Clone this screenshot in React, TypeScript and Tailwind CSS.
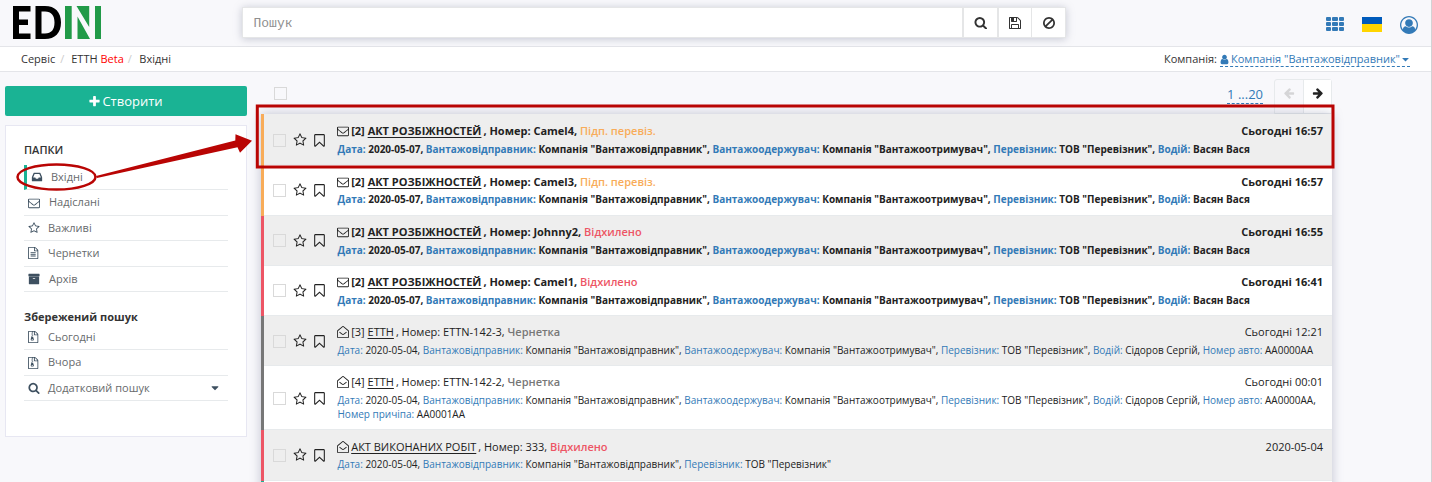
import React from "react";

const P: Record<string, string> = {
  envelope:
    "M1664 1504v-768q-32 36-69 66-268 206-426 338-51 43-83 67t-86.5 48.5-102.5 24.5h-2q-48 0-102.5-24.5t-86.5-48.5-83-67q-158-132-426-338-37-30-69-66v768q0 13 9.5 22.5t22.5 9.5h1472q13 0 22.5-9.5t9.5-22.5zm0-1051v-24.5l-.5-13-3-12.5-5.5-9-9-7.5-14-2.5h-1472q-13 0-22.5 9.5t-9.5 22.5q0 168 147 284 193 152 401 317 6 5 35 29.5t46 37.5 44.5 31.5 50.5 27.5 43 9h2q20 0 43-9t50.5-27.5 44.5-31.5 46-37.5 35-29.5q208-165 401-317 54-43 100.5-115.5t46.5-131.5zm128-37v1088q0 66-47 113t-113 47h-1472q-66 0-113-47t-47-113v-1088q0-66 47-113t113-47h1472q66 0 113 47t47 113z",
  envelopeOpen:
    "M64 640L800 50Q896 -20 992 50L1728 640Q1792 700 1792 770V1632Q1792 1792 1632 1792H160Q0 1792 0 1632V770Q0 700 64 640ZM160 730Q128 755 128 790V1632Q128 1664 160 1664H1632Q1664 1664 1664 1632V790Q1664 755 1632 730L930 165Q896 140 862 165ZM330 960L410 860L800 1170Q896 1240 992 1170L1382 860L1462 960L1060 1280Q896 1400 732 1280Z",
  bookmark:
    "M1408 256h-1024v1242l423-406 89-85 89 85 423 406v-1242zm12-128q23 0 44 9 33 13 52.5 41t19.5 62v1289q0 34-19.5 62t-52.5 41q-19 8-44 8-48 0-83-32l-441-424-441 424q-36 33-83 33-23 0-44-9-33-13-52.5-41t-19.5-62v-1289q0-34 19.5-62t52.5-41q21-9 44-9h1048z",
  star: "M1201 1004l306-297-422-62-189-382-189 382-422 62 306 297-73 421 378-199 377 199zm527-357q0 22-26 48l-363 354 86 500q1 7 1 20 0 50-41 50-19 0-40-12l-449-236-449 236q-22 12-40 12-21 0-31.5-14.5t-10.5-35.5q0-6 2-20l86-500-364-354q-25-27-25-48 0-37 56-46l502-73 225-455q19-41 49-41t49 41l225 455 502 73q56 9 56 46z",
  inbox:
    "M1151 960h316q-1-3-2.5-8t-2.5-8l-212-496h-708l-212 496q-1 2-2.5 8t-2.5 8h316l95 192h320zm513 30v482q0 26-19 45t-45 19h-1408q-26 0-45-19t-19-45v-482q0-62 25-123l238-552q10-25 36.5-42t52.5-17h832q26 0 52.5 17t36.5 42l238 552q25 61 25 123z",
  search:
    "M1216 832q0-185-131.5-316.5t-316.5-131.5-316.5 131.5-131.5 316.5 131.5 316.5 316.5 131.5 316.5-131.5 131.5-316.5zm512 832q0 52-38 90t-90 38q-54 0-90-38l-343-342q-179 124-399 124-143 0-273.5-55.5t-225-150-150-225-55.5-273.5 55.5-273.5 150-225 225-150 273.5-55.5 273.5 55.5 225 150 150 225 55.5 273.5q0 220-124 399l343 343q37 37 37 90z",
  floppy:
    "M512 1536h768v-384h-768v384zm896 0h128v-896q0-14-10-38.5t-20-34.5l-281-281q-10-10-34-20t-39-10v416q0 40-28 68t-68 28h-576q-40 0-68-28t-28-68v-416h-128v1280h128v-416q0-40 28-68t68-28h832q40 0 68 28t28 68v416zm-384-928v-320q0-13-9.5-22.5t-22.5-9.5h-192q-13 0-22.5 9.5t-9.5 22.5v320q0 13 9.5 22.5t22.5 9.5h192q13 0 22.5-9.5t9.5-22.5zm640 32v928q0 40-28 68t-68 28h-1344q-40 0-68-28t-28-68v-1344q0-40 28-68t68-28h928q40 0 88 20t76 48l280 280q28 28 48 76t20 88z",
  ban: "M1440 893q0-161-87-295l-754 753q137 89 297 89 111 0 211.5-43.5t173.5-116.5 116-174.5 43-212.5zm-999 299l755-754q-135-91-300-91-148 0-273 73t-198 199-73 274q0 162 89 299zm1223-299q0 157-61 300t-163.5 246-245 164-298.5 61-298.5-61-245-164-163.5-246-61-300 61-299.5 163.5-245.5 245-164 298.5-61 298.5 61 245 164 163.5 245.5 61 299.5z",
  userCircle:
    "M896 0q182 0 348 71t286 191 191 286 71 348q0 181-70.5 347t-190.5 286-286 191.5-349 71.5-349-71-285.5-191.5-190.5-286-71-347.5 71-348 191-286 286-191 348-71zm619 1351q149-205 149-455 0-156-61-298t-164-245-245-164-298-61-298 61-245 164-164 245-61 298q0 250 149 455 66-327 306-327 131 128 313 128t313-128q240 0 306 327zm-235-647q0-159-112.5-271.5t-271.5-112.5-271.5 112.5-112.5 271.5 112.5 271.5 271.5 112.5 271.5-112.5 112.5-271.5z",
  archive:
    "M1088 832q0-26-19-45t-45-19h-256q-26 0-45 19t-19 45 19 45 45 19h256q26 0 45-19t19-45zm576-192v960q0 26-19 45t-45 19h-1408q-26 0-45-19t-19-45v-960q0-26 19-45t45-19h1408q26 0 45 19t19 45zm64-448v256q0 26-19 45t-45 19h-1536q-26 0-45-19t-19-45v-256q0-26 19-45t45-19h1536q26 0 45 19t19 45z",
  fileText:
    "M1468 380q28 28 48 76t20 88v1152q0 40-28 68t-68 28h-1344q-40 0-68-28t-28-68v-1600q0-40 28-68t68-28h896q40 0 88 20t76 48zm-444-244v376h376q-10-29-22-41l-313-313q-12-12-41-22zm384 1528v-1024h-416q-40 0-68-28t-28-68v-416h-768v1536h1280zm-1024-864q0-14 9-23t23-9h704q14 0 23 9t9 23v64q0 14-9 23t-23 9h-704q-14 0-23-9t-9-23v-64zm736 224q14 0 23 9t9 23v64q0 14-9 23t-23 9h-704q-14 0-23-9t-9-23v-64q0-14 9-23t23-9h704zm0 256q14 0 23 9t9 23v64q0 14-9 23t-23 9h-704q-14 0-23-9t-9-23v-64q0-14 9-23t23-9h704z",
  fileZip:
    "M1468 380q28 28 48 76t20 88v1152q0 40-28 68t-68 28h-1344q-40 0-68-28t-28-68v-1600q0-40 28-68t68-28h896q40 0 88 20t76 48zm-444-244v376h376q-10-29-22-41l-313-313q-12-12-41-22zm384 1528v-1024h-416q-40 0-68-28t-28-68v-416h-128v128h-128v-128h-512v1536h1280zM512 256h128v128h-128zM640 384h128v128h-128zM512 512h128v128h-128zM640 640h128v128h-128zM512 768h128v128h128l107 349q21 70-35 130t-200 60-200-60-35-130zM640 1344q53 0 90-19t37-45-37-45-90-19-90 19-37 45 37 45 90 19z",
  plus: "M1600 736v192q0 40-28 68t-68 28h-416v416q0 40-28 68t-68 28h-192q-40 0-68-28t-28-68v-416h-416q-40 0-68-28t-28-68v-192q0-40 28-68t68-28h416v-416q0-40 28-68t68-28h192q40 0 68 28t28 68v416h416q40 0 68 28t28 68z",
  arrow:
    "M1600 960q0 54-37 91l-651 651q-39 37-91 37-51 0-90-37l-75-75q-38-38-38-91t38-91l293-293h-704q-52 0-84.5-37.5t-32.5-90.5v-128q0-53 32.5-90.5t84.5-37.5h704l-293-294q-38-36-38-90t38-90l75-75q38-38 90-38 53 0 91 38l651 651q37 35 37 90z",
  user: "M1536 1399q0 109-62.5 187t-150.5 78h-854q-88 0-150.5-78t-62.5-187q0-85 8.5-160.5t31.5-152 58.5-131 94-89 134.5-34.5q131 128 313 128t313-128q76 0 134.5 34.5t94 89 58.5 131 31.5 152 8.5 160.5zm-256-887q0 159-112.5 271.5t-271.5 112.5-271.5-112.5-112.5-271.5 112.5-271.5 271.5-112.5 271.5 112.5 112.5 271.5z",
  caret: "M1408 704q0 26-19 45l-448 448q-19 19-45 19t-45-19l-448-448q-19-19-19-45t19-45 45-19h896q26 0 45 19t19 45z",
};

function Icon({ name, className }: { name: string; className?: string }) {
  return (
    <svg viewBox="0 0 1792 1792" fill="currentColor" className={`shrink-0 ${className ?? ""}`}>
      <path d={P[name]} fillRule={name === "fileZip" || name === "envelopeOpen" ? "evenodd" : "nonzero"} />
    </svg>
  );
}

function Logo() {
  return (
    <svg viewBox="0 0 89 33" className="h-[33px] w-[89px]">
      <path d="M0 0H17.5V5.5H6V13.5H15V19H6V27.5H17.5V33H0Z" fill="#000" />
      <path d="M22.500 0H32C42 0 48 6 48 16.500S42 33 32 33H22.500ZM28.500 5.500V27.500H32C38.500 27.500 41.500 23.500 41.500 16.500S38.500 5.500 32 5.500Z" fill="#000" fillRule="evenodd" />
      <path d="M52 0H58.700V33H52ZM63.500 0L76.200 21V0ZM64.500 10.500V33H77ZM82 0H88V33H82Z" fill="#219a48" />
    </svg>
  );
}

type Field = [string, string];
interface Mail {
  h: string;
  pad: string;
  gap: string;
  iconPad: string;
  bar: string;
  unread: boolean;
  count?: string;
  title: string;
  num: string;
  status: string;
  color: string;
  time: string;
  fields: Field[];
}

const company: Field[] = [
  ["Вантажовідправник:", 'Компанія "Вантажовідправник"'],
  ["Вантажоодержувач:", 'Компанія "Вантажоотримувач"'],
  ["Перевізник:", 'ТОВ "Перевізник"'],
];
const unreadFields: Field[] = [["Дата:", "2020-05-07"], ...company, ["Водій:", "Васян Вася"]];
const readFields: Field[] = [["Дата:", "2020-05-04"], ...company, ["Водій:", "Сідоров Сергій"], ["Номер авто:", "АА0000АА"]];

const orange = { bar: "bg-[#f8ac59]", color: "text-[#f8ac59]" };
const red = { bar: "bg-[#ed5565]", color: "text-[#ed5565]" };
const gray = { bar: "bg-[#777777]", color: "text-[#777777]" };

const mails: Mail[] = [
  { h: "h-[51px]", pad: "pt-[8px]", gap: "pt-[2px]", iconPad: "pt-[2px]", ...orange, unread: true, count: "[2]", title: "АКТ РОЗБІЖНОСТЕЙ", num: "Camel4", status: "Підп. перевіз.", time: "Сьогодні 16:57", fields: unreadFields },
  { h: "h-[51px]", pad: "pt-[8px]", gap: "pt-[1px]", iconPad: "pt-0", ...orange, unread: true, count: "[2]", title: "АКТ РОЗБІЖНОСТЕЙ", num: "Camel3", status: "Підп. перевіз.", time: "Сьогодні 16:57", fields: unreadFields },
  { h: "h-[50px]", pad: "pt-[7px]", gap: "pt-[2px]", iconPad: "pt-0", ...red, unread: true, count: "[2]", title: "АКТ РОЗБІЖНОСТЕЙ", num: "Johnny2", status: "Відхилено", time: "Сьогодні 16:55", fields: unreadFields },
  { h: "h-[50px]", pad: "pt-[7px]", gap: "pt-[2px]", iconPad: "pt-0", ...red, unread: true, count: "[2]", title: "АКТ РОЗБІЖНОСТЕЙ", num: "Camel1", status: "Відхилено", time: "Сьогодні 16:41", fields: unreadFields },
  { h: "h-[50px]", pad: "pt-[7px]", gap: "pt-[2px]", iconPad: "pt-[1px]", ...gray, unread: false, count: "[3]", title: "ЕТТН", num: "ETTN-142-3", status: "Чернетка", time: "Сьогодні 12:21", fields: readFields },
  { h: "h-[64px]", pad: "pt-[7px]", gap: "pt-[2px]", iconPad: "pt-[2px]", ...gray, unread: false, count: "[4]", title: "ЕТТН", num: "ETTN-142-2", status: "Чернетка", time: "Сьогодні 00:01", fields: [...readFields, ["Номер причіпа:", "АА0001АА"]] },
  { h: "h-[51px]", pad: "pt-[8px]", gap: "pt-[1px]", iconPad: "pt-0", ...red, unread: false, title: "АКТ ВИКОНАНИХ РОБІТ", num: "333", status: "Відхилено", time: "2020-05-04", fields: [["Дата:", "2020-05-04"], company[0], company[2]] },
];

function Checkbox() {
  return <span className="size-[13px] shrink-0 border border-[#d9d9d9]" />;
}

function MailRow({ mail, odd }: { mail: Mail; odd: boolean }) {
  return (
    <div className={`flex shrink-0 ${mail.h}`}>
      <div className={`w-[3px] shrink-0 ${mail.bar}`} />
      <div className={`flex min-w-0 flex-1 border-b border-[#e7eaec] text-[#222222] ${odd ? "bg-[#eeeeee]" : "bg-white"}`}>
        <div className={`flex w-[73.500px] shrink-0 items-center pl-[9px] ${mail.iconPad}`}>
          <Checkbox />
          <Icon name="star" className="ml-[7px] size-[14px]" />
          <Icon name="bookmark" className="ml-[5px] size-[15px]" />
        </div>
        <div className={`min-w-0 flex-1 pr-[9px] ${mail.pad} ${mail.unread ? "font-bold" : ""}`}>
          <div className="flex h-[18px] items-center text-[11px] leading-[18px] whitespace-pre">
            <Icon name={mail.unread ? "envelope" : "envelopeOpen"} className="-ml-[0.5px] mr-[2.200px] size-[12px]" />
            {mail.count && <span>{mail.count} </span>}
            <span className="underline underline-offset-2">{mail.title}</span>
            <span className="ml-[2px]">, Номер: {mail.num}, </span>
            <span className={`font-semibold ${mail.color}`}>{mail.status}</span>
            <span className="ml-auto">{mail.time}</span>
          </div>
          <div className={`-mr-[1px] text-[10px] leading-[14px] ${mail.gap}`}>
            {mail.fields.map(([k, v], i) => (
              <React.Fragment key={k}>
                <span className="text-[#337ab7]">{k}</span> {v}
                {i < mail.fields.length - 1 ? ", " : ""}
              </React.Fragment>
            ))}
          </div>
        </div>
      </div>
    </div>
  );
}

function FolderItem({ icon, label, active, caret, narrow }: { icon: string; label: string; active?: boolean; caret?: boolean; narrow?: boolean }) {
  return (
    <div
      className={`flex h-[25.400px] items-center border-b border-[#e7eaec] pl-1 text-[11px] text-[#676a6c] ${active ? "border-l-[3px] border-l-[#1ab394]" : ""}`}
    >
      <Icon name={icon} className="size-[12px] text-[#3e5060]" />
      <span className={narrow ? "ml-[8px]" : "ml-[9px]"}>{label}</span>
      {caret && <Icon name="caret" className="mr-[7px] ml-auto size-[12px] text-[#3e5060]" />}
    </div>
  );
}

export default function App() {
  return (
    <div className="relative flex h-[482px] w-[1432px] flex-col overflow-hidden border-r border-[#d2d2d4] bg-[#f8f8fb] font-['Open_Sans',sans-serif] text-[#333333]">
      <header className="flex h-[47px] shrink-0 items-start border-b border-[#e4e5e9] pl-[13px]">
        <div className="w-[229px] pt-[6px]">
          <Logo />
        </div>
        <div className="mt-[7px] flex h-[31px] w-[824px] border border-[#e5e6e7] bg-white shadow-[0_1px_8px_rgba(120,125,150,0.4)]">
          <div className="flex flex-1 items-center pt-[2px] pl-[10.500px] font-['Liberation_Mono',monospace] text-[13px] text-[#8f8f8f]">Пошук</div>
          <div className="flex w-[35px] items-center justify-center border-l-2 border-[#e5e6e7]">
            <Icon name="search" className="size-[13.500px]" />
          </div>
          <div className="flex w-[34px] items-center justify-center border-l-2 border-[#e5e6e7]">
            <Icon name="floppy" className="size-[14px]" />
          </div>
          <div className="flex w-[34px] items-center justify-center border-l border-[#e5e6e7]">
            <Icon name="ban" className="size-[14px]" />
          </div>
        </div>
        <div className="ml-auto flex h-[47px] items-center gap-[18px] pt-[2px] pr-[13px] text-[#337ab7]">
          <div className="-mt-[1px] grid grid-cols-3 gap-x-[1px] gap-y-[1px]">
            {Array.from({ length: 9 }, (_, i) => (
              <span key={i} className="h-[4px] w-[5.4px] rounded-[1px] bg-[#337ab7]" />
            ))}
          </div>
          <div className="flex h-[15px] w-[20px] flex-col">
            <span className="h-[7px] bg-[#005bbb]" />
            <span className="flex-1 bg-[#ffd500]" />
          </div>
          <Icon name="userCircle" className="size-[18px]" />
        </div>
      </header>

      <nav className="flex h-[25px] shrink-0 items-center justify-between border-b border-[#e4e5e9] bg-white pr-[21px] pl-[21px] text-[11px]">
        <div className="flex">
          <span>Сервіс</span>
          <span className="mx-[5px] text-[#cccccc]">/</span>
          <span className="ml-[2px]">
            ЕТТН <span className="text-[#ff0000]">Beta</span>
          </span>
          <span className="mr-[5px] ml-[4px] text-[#cccccc]">/</span>
          <span className="ml-[2.500px]">Вхідні</span>
        </div>
        <div className="flex leading-[14px]">
          <span className="pt-px">Компанія:</span>
          <span className="ml-[3px] flex items-center border-b border-dashed border-[#337ab7] pt-px text-[#337ab7]">
            <Icon name="user" className="mr-[1px] -ml-[1px] size-[11px]" />
            Компанія "Вантажовідправник"
            <Icon name="caret" className="-mr-[1px] size-[11px]" />
          </span>
        </div>
      </nav>

      <main className="flex min-h-0 flex-1">
        <aside className="ml-[5px] w-[242px] shrink-0 pt-[14px]">
          <div className="flex h-[30px] items-center justify-center gap-[1px] rounded-[2px] bg-[#1ab394] pt-[2px] pr-[1px] text-[13px] text-white">
            <Icon name="plus" className="-mt-[2px] size-[13px]" />
            Створити
          </div>
          <div className="mt-[9px] h-[312px] border border-[#e7e7f2] bg-white px-[18px] pt-[14px]">
            <div className="h-[25px] text-[11px] leading-[19px] font-semibold">ПАПКИ</div>
            <FolderItem icon="inbox" label="Вхідні" active narrow />
            <FolderItem icon="envelope" label="Надіслані" />
            <FolderItem icon="star" label="Важливі" narrow />
            <FolderItem icon="fileText" label="Чернетки" narrow />
            <FolderItem icon="archive" label="Архів" />
            <div className="mt-[15px] h-[18px] text-[11px] leading-[19px] font-bold">Збережений пошук</div>
            <FolderItem icon="fileZip" label="Сьогодні" narrow />
            <FolderItem icon="fileZip" label="Вчора" narrow />
            <FolderItem icon="search" label="Додатковий пошук" caret narrow />
          </div>
        </aside>

        <section className="ml-[14px] w-[1071px] shrink-0">
          <div className="flex h-[42px] items-end pl-[13px]">
            <div className="mb-[14px] flex">
              <Checkbox />
            </div>
            <div className="mr-[11px] mb-[10px] ml-auto border-b border-dashed border-[#337ab7] text-[13px] leading-[17px] text-[#337ab7]">1 ...20</div>
            <div className="flex h-[35px] w-[58px] rounded-t-[3px] border border-[#e7eaec]">
              <div className="flex w-[28px] items-start justify-center pt-[7px] text-[#d5d5d7]">
                <Icon name="arrow" className="size-[12px] -scale-x-100" />
              </div>
              <div className="flex flex-1 items-start justify-center border-l border-[#e7eaec] bg-white pt-[7px] text-[#222222]">
                <Icon name="arrow" className="size-[12px]" />
              </div>
            </div>
          </div>
          <div className="relative shadow-[0_0_10px_rgba(110,115,150,0.4)]">
            {mails.map((m, i) => (
              <MailRow key={i} mail={m} odd={i % 2 === 0} />
            ))}
            <div className="h-[20px] border-l-[3px] border-[#1ab394] bg-white" />
          </div>
        </section>
      </main>

      <svg viewBox="0 0 1432 482" className="pointer-events-none absolute inset-0 h-[482px] w-[1432px]">
        <g fill="none" stroke="#b90504">
          <ellipse cx="56.500" cy="177" rx="39" ry="12.500" strokeWidth="2.500" />
          <rect x="257.300" y="106" width="1075.700" height="61" strokeWidth="3" />
        </g>
        <path d="M96 176L235.300 140.500L235.500 134.300L252 140.700L240 152.800L237.500 147.300L97 178Z" fill="#b90504" />
      </svg>
    </div>
  );
}
